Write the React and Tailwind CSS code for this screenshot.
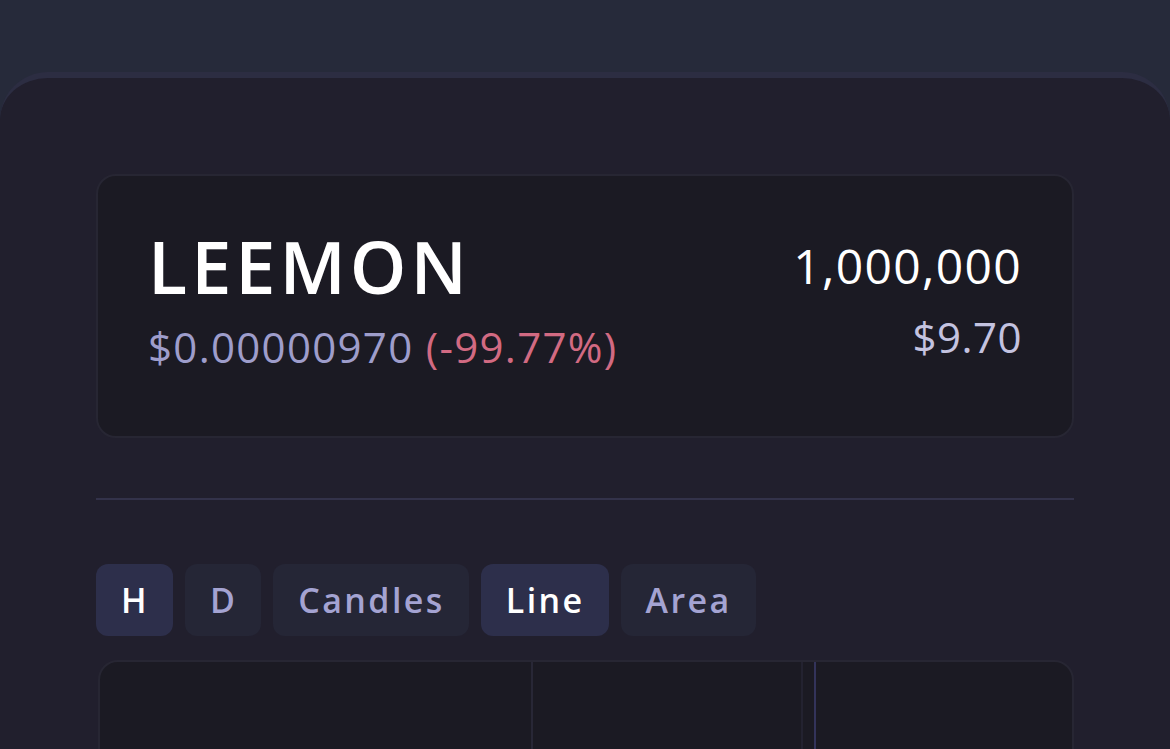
import React, { useState } from 'react';

const RANGES = ['H', 'D'];
const TYPES = ['Candles', 'Line', 'Area'];

const ToggleButton = ({ label, active, onClick }) => (
  <button
    onClick={onClick}
    className={`h-[72px] rounded-xl pl-[25px] pr-6 text-[34px] font-semibold leading-none tracking-[2.4px] ${
      active ? 'bg-[#2d2f4b] text-white' : 'bg-[#252636] text-[#a4a3d2]'
    }`}
  >
    {label}
  </button>
);

export default function App() {
  const [range, setRange] = useState('H');
  const [type, setType] = useState('Line');

  return (
    <div className="min-h-screen bg-[#262a3a] pt-[72px] font-['Open_Sans',sans-serif]">
      <div className="min-h-[677px] rounded-t-[48px] border-t-[6px] border-[#2c2d42] bg-[#211f2d] px-24 pt-24">
        {/* Token header */}
        <div className="flex h-[264px] items-start justify-between rounded-[20px] border-2 border-[#272633] bg-[#1b1a23] px-[50px] pt-[54px]">
          <div>
            <h1 className="text-[72px] font-semibold leading-none tracking-[4px] text-white">LEEMON</h1>
            <p className="mt-[24px] text-[42px] leading-none tracking-[1.3px] text-[#9e9dcb]">
              $0.00000970 <span className="text-[#d26a82]">(-99.77%)</span>
            </p>
          </div>
          <div className="pt-[12px] text-right">
            <div className="text-[48px] leading-none tracking-[1.3px] text-white">1,000,000</div>
            <div className="mt-[26px] text-[42px] leading-none tracking-[0.5px] text-[#c4c3e0]">$9.70</div>
          </div>
        </div>

        <div className="mt-[60px] h-[2px] bg-[#33324a]" />

        {/* Chart controls */}
        <div className="mt-16 flex gap-3">
          {RANGES.map((r) => (
            <ToggleButton key={r} label={r} active={range === r} onClick={() => setRange(r)} />
          ))}
          {TYPES.map((t) => (
            <ToggleButton key={t} label={t} active={type === t} onClick={() => setType(t)} />
          ))}
        </div>

        {/* Chart */}
        <div className="relative ml-[2px] mt-6 h-[240px] overflow-hidden rounded-[20px] border-2 border-[#272633] bg-[#1b1a23]">
          <div className="absolute top-0 bottom-0 left-[431px] w-[2px] bg-[#282736]" />
          <div className="absolute top-0 bottom-0 left-[701px] w-[2px] bg-[#232230]" />
          <div className="absolute top-0 bottom-0 left-[714px] w-[2px] bg-[#33335a]" />
        </div>
      </div>
    </div>
  );
}
